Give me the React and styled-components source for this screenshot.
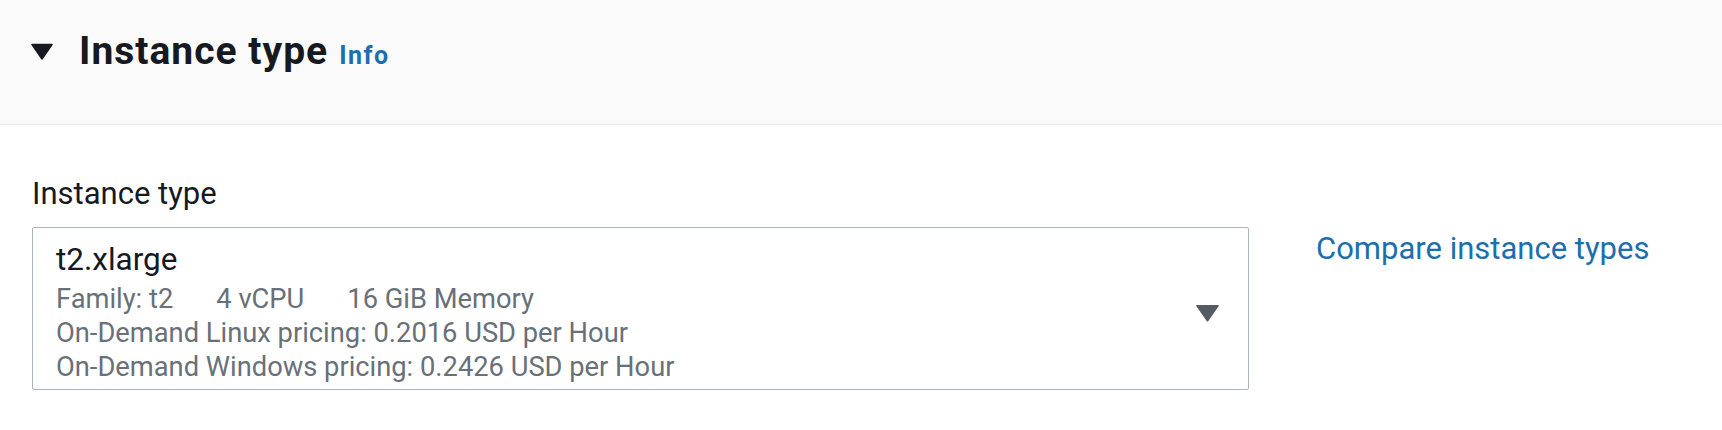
import styled, { createGlobalStyle } from "styled-components";

const GlobalStyle = createGlobalStyle`
    body {
        margin: 0;
        background: #ffffff;
        font-family: Roboto, "Liberation Sans", sans-serif;
        color: #16191f;
    }
`

function Caret({ width, height, color }) {
    return (
        <svg width={width} height={height} viewBox="0 0 22 17" aria-hidden="true">
            <path d="M1 1.5 L21 1.5 L11 16 Z" fill={color} stroke={color} strokeWidth="1.5" strokeLinejoin="round" />
        </svg>
    )
}

export default function App() {
    return (
        <Page>
            <GlobalStyle />
            <Header>
                <Caret width={22} height={17} color="#16191f" />
                <Title>
                    Instance type
                    <InfoLink>Info</InfoLink>
                </Title>
            </Header>
            <Body>
                <Label>Instance type</Label>
                <Row>
                    <Select>
                        <SelectText>
                            <Primary>t2.xlarge</Primary>
                            <Secondary>
                                <Tag>Family: t2</Tag>
                                <Tag>4 vCPU</Tag>
                                <Tag>16 GiB Memory</Tag>
                            </Secondary>
                            <Secondary>On-Demand Linux pricing: 0.2016 USD per Hour</Secondary>
                            <Secondary>On-Demand Windows pricing: 0.2426 USD per Hour</Secondary>
                        </SelectText>
                        <Caret width={23} height={18} color="#545b64" />
                    </Select>
                    <CompareLink>Compare instance types</CompareLink>
                </Row>
            </Body>
        </Page>
    )
}

const Page = styled.div`
    width: 100%;
    min-height: 430px;
`

const Header = styled.div`
    box-sizing: border-box;
    height: 125px;
    padding: 28px 31px 0;
    background: #fafafa;
    border-bottom: 1px solid #eaeded;
    display: flex;
    align-items: flex-start;
    gap: 26px;
    svg {
        margin-top: 15px;
    }
`

const Title = styled.h2`
    margin: 0;
    font-size: 39px;
    line-height: 46px;
    font-weight: 700;
    letter-spacing: 1px;
    color: #16191f;
`

const InfoLink = styled.span`
    margin-left: 11px;
    font-size: 25px;
    font-weight: 700;
    letter-spacing: 1.5px;
    color: #1a6fae;
`

const Body = styled.div`
    padding: 51px 33px 0 32px;
`

const Label = styled.div`
    font-size: 31px;
    line-height: 36px;
    color: #16191f;
    margin-bottom: 15px;
`

const Row = styled.div`
    display: flex;
    align-items: flex-start;
    gap: 67px;
`

const Select = styled.div`
    box-sizing: border-box;
    width: 1217px;
    height: 163px;
    border: 1px solid #aab7b8;
    border-radius: 2px;
    padding: 14px 29px 6px 23px;
    display: flex;
    align-items: center;
    justify-content: space-between;
`

const SelectText = styled.div`
    align-self: flex-start;
    display: flex;
    flex-direction: column;
`

const Primary = styled.div`
    font-size: 31.5px;
    line-height: 36px;
    color: #16191f;
    margin-bottom: 4px;
`

const Secondary = styled.div`
    display: flex;
    gap: 43px;
    font-size: 27.3px;
    line-height: 34px;
    color: #687078;
`

const Tag = styled.span``

const CompareLink = styled.a`
    margin-top: 4px;
    font-size: 31px;
    line-height: 36px;
    color: #1a6fae;
    white-space: nowrap;
    cursor: pointer;
`
